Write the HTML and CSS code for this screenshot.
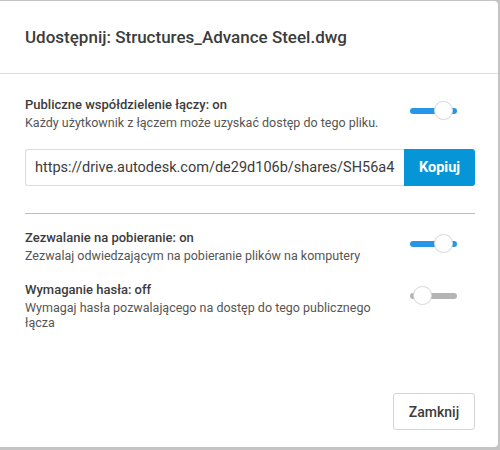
FILE: index.html
```html
<!DOCTYPE html>
<html lang="pl">
<head>
    <meta charset="UTF-8">
    <meta name="viewport" content="width=device-width, initial-scale=1.0">
    <title>Udostępnij</title>
    <link rel="stylesheet" href="styles.css">
</head>
<body>
    <div class="dialog">
        <div class="dialog-header">
            <h1>Udostępnij: Structures_Advance Steel.dwg</h1>
        </div>

        <div class="dialog-body">
            <div class="option">
                <div class="option-text">
                    <div class="option-label">Publiczne współdzielenie łączy: on</div>
                    <div class="option-desc">Każdy użytkownik z łączem może uzyskać dostęp do tego pliku.</div>
                </div>
                <div class="toggle on"><span class="knob"></span></div>
            </div>

            <div class="link-row">
                <input class="link-input" type="text" value="https://drive.autodesk.com/de29d106b/shares/SH56a43c1f2d" readonly>
                <button class="btn-primary">Kopiuj</button>
            </div>

            <hr class="divider">

            <div class="option">
                <div class="option-text">
                    <div class="option-label">Zezwalanie na pobieranie: on</div>
                    <div class="option-desc">Zezwalaj odwiedzającym na pobieranie plików na komputery</div>
                </div>
                <div class="toggle on"><span class="knob"></span></div>
            </div>

            <div class="option">
                <div class="option-text">
                    <div class="option-label">Wymaganie hasła: off</div>
                    <div class="option-desc">Wymagaj hasła pozwalającego na dostęp do tego publicznego łącza</div>
                </div>
                <div class="toggle"><span class="knob"></span></div>
            </div>
        </div>

        <div class="dialog-footer">
            <button class="btn-secondary">Zamknij</button>
        </div>
    </div>
</body>
</html>
```

FILE: styles.css
```css
body {
    margin: 0;
    padding: 0;
    background: #c4c4c4;
    font-family: 'Roboto', 'Noto Sans', sans-serif;
    color: #3c3c3c;
}

.dialog {
    width: 498px;
    height: 446px;
    margin-top: 1px;
    background: #fff;
    border-radius: 0 4px 4px 0;
    display: flex;
    flex-direction: column;
    box-sizing: border-box;
}

.dialog-header {
    height: 72px;
    border-bottom: 1px solid #dcdcdc;
    padding: 0 25px;
    display: flex;
    align-items: center;
}

h1 {
    margin: 0;
    font-size: 17px;
    font-weight: 500;
    color: #3c3c3c;
}

.dialog-body {
    padding: 22px 23px 0 25px;
    flex: 1;
}

.option {
    display: flex;
    justify-content: space-between;
    align-items: flex-start;
    margin-bottom: 18px;
}

.option-text {
    width: 355px;
}

.option-label {
    font-size: 13px;
    font-weight: 500;
    line-height: 18px;
    color: #3c3c3c;
}

.option-desc {
    font-size: 12.5px;
    line-height: 15px;
    color: #555;
    margin-top: 1px;
}

/* Toggle switch */
.toggle {
    position: relative;
    width: 47px;
    height: 6px;
    border-radius: 3px;
    background: #b4b4b4;
    margin: 12px 18px 0 0;
}

.toggle.on {
    background: #2596e8;
}

.knob {
    position: absolute;
    top: -7px;
    left: 3px;
    width: 19px;
    height: 19px;
    border-radius: 50%;
    background: #fff;
    border: 1px solid #dcdcdc;
    box-sizing: border-box;
    box-shadow: 0 0 1px rgba(0, 0, 0, 0.1);
}

.toggle.on .knob {
    left: 24px;
}

/* Link row */
.link-row {
    display: flex;
    margin-top: 19px;
}

.link-input {
    flex: 1;
    min-width: 0;
    height: 37px;
    box-sizing: border-box;
    border: 1px solid #dcdcdc;
    border-right: none;
    border-radius: 3px 0 0 3px;
    padding: 0 9px;
    font-family: 'Roboto', 'Noto Sans', sans-serif;
    font-size: 14.5px;
    color: #3c3c3c;
    outline: none;
}

.btn-primary {
    width: 71px;
    height: 37px;
    border: none;
    border-radius: 0 3px 3px 0;
    background: #0696d7;
    color: #fff;
    font-family: 'Roboto', 'Noto Sans', sans-serif;
    font-size: 14.5px;
    font-weight: 700;
    cursor: pointer;
}

.divider {
    border: none;
    border-top: 1px solid #bdbdbd;
    margin: 27px 0 15px 0;
}

.dialog-footer {
    display: flex;
    justify-content: flex-end;
    padding: 0 23px 17px 25px;
}

.btn-secondary {
    width: 82px;
    height: 37px;
    background: #fff;
    border: 1px solid #d4d4d4;
    border-radius: 3px;
    font-family: 'Roboto', 'Noto Sans', sans-serif;
    font-size: 14px;
    font-weight: 500;
    color: #3c3c3c;
    cursor: pointer;
}
```
